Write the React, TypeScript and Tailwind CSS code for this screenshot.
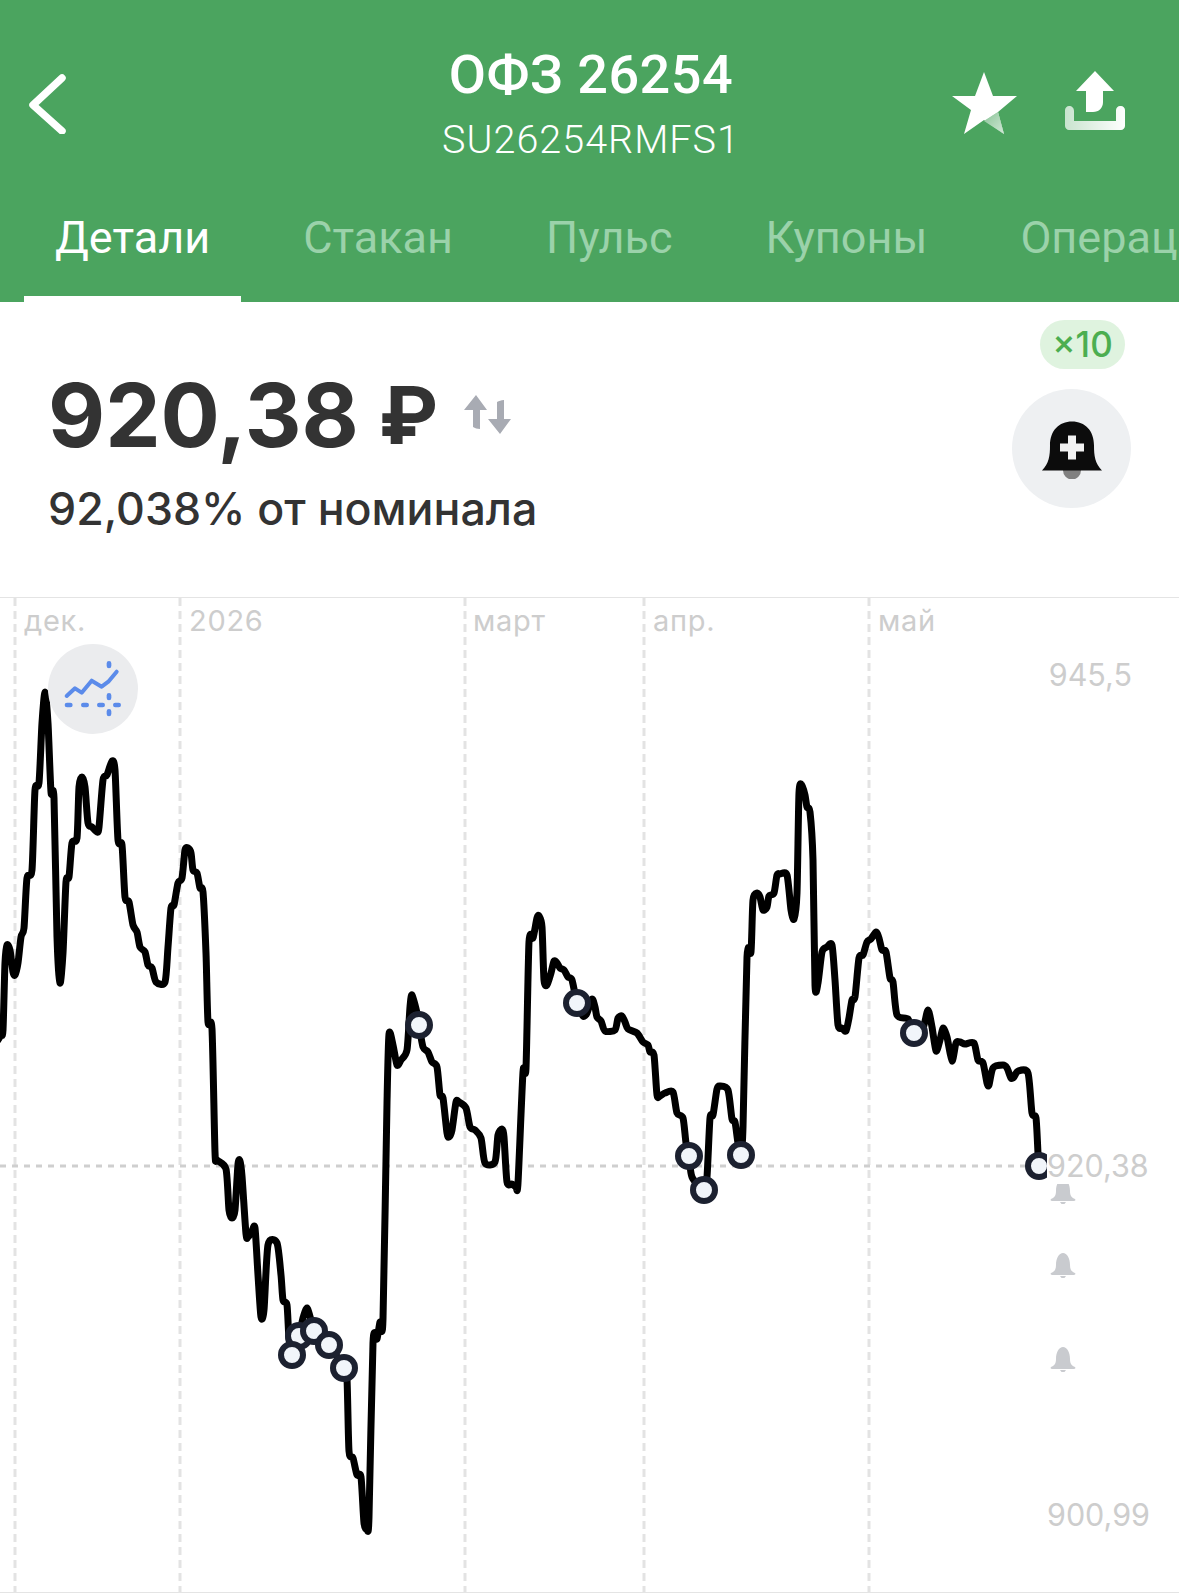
const tabs = ["Детали", "Стакан", "Пульс", "Купоны", "Операции"];

const monthLabels = [
  { text: "дек.", cls: "left-[24px]" },
  { text: "2026", cls: "left-[189px]" },
  { text: "март", cls: "left-[473px]" },
  { text: "апр.", cls: "left-[653px]" },
  { text: "май", cls: "left-[878px]" },
];

const gridX = [15, 180, 465, 644, 869];

// traced from the reference, page coordinates
const pts: [number, number][] = [
  [-2, 1040], [1, 1035], [3, 1030], [5, 963], [7, 945], [10, 950], [13, 972], [15, 975], [18, 963], [21, 937], [24, 928], [27, 878], [32, 870], [35, 790], [39, 783], [42, 723], [45, 692], [48, 723], [51, 792], [54, 798], [57, 937], [60, 983], [63, 953], [66, 882], [69, 877], [72, 843], [77, 838], [79, 787], [82, 777], [85, 787], [88, 823], [92, 827], [97, 832], [99, 827], [103, 780], [107, 775], [112, 761], [115, 770], [118, 840], [122, 845], [125, 897], [129, 902], [133, 925], [137, 932], [140, 947], [145, 952], [148, 965], [152, 968], [156, 982], [165, 982], [168, 947], [171, 908], [174, 905], [178, 883], [182, 878], [185, 850], [188, 848], [191, 853], [193, 870], [197, 873], [200, 888], [203, 892], [206, 953], [208, 1022], [212, 1029], [215, 1152], [217, 1160], [226, 1169], [229, 1210], [232, 1218], [235, 1210], [238, 1164], [240, 1161], [242, 1176], [246, 1234], [248, 1237], [252, 1231], [255, 1228], [258, 1275], [261, 1317], [264, 1310], [268, 1245], [277, 1243], [281, 1275], [283, 1300], [287, 1305], [289, 1339], [292, 1355], [299, 1336], [303, 1318], [307, 1308], [311, 1320], [314, 1331], [329, 1345], [344, 1368], [347, 1379], [349, 1451], [353, 1458], [357, 1475], [361, 1477], [364, 1523], [367, 1529], [369, 1517], [373, 1343], [377, 1339], [380, 1322], [383, 1319], [387, 1103], [389, 1034], [393, 1045], [397, 1065], [401, 1060], [407, 1050], [410, 1007], [412, 995], [417, 1013], [419, 1025], [423, 1047], [428, 1052], [432, 1062], [437, 1067], [440, 1095], [443, 1098], [447, 1133], [449, 1137], [452, 1130], [456, 1102], [459, 1102], [466, 1108], [470, 1127], [475, 1130], [481, 1138], [485, 1163], [495, 1162], [498, 1135], [502, 1129], [504, 1137], [507, 1182], [512, 1184], [516, 1187], [518, 1183], [523, 1072], [526, 1068], [529, 942], [533, 938], [537, 918], [539, 916], [542, 927], [544, 980], [547, 985], [551, 973], [554, 961], [557, 963], [560, 968], [564, 970], [568, 977], [572, 980], [577, 1003], [583, 1016], [587, 1013], [592, 999], [595, 1007], [597, 1017], [601, 1021], [605, 1031], [615, 1030], [618, 1018], [622, 1016], [625, 1022], [628, 1029], [637, 1033], [643, 1042], [648, 1045], [650, 1052], [654, 1055], [657, 1095], [660, 1096], [665, 1093], [673, 1092], [677, 1113], [683, 1118], [686, 1143], [689, 1156], [692, 1177], [704, 1190], [707, 1177], [710, 1118], [713, 1115], [717, 1089], [720, 1086], [728, 1090], [732, 1119], [735, 1122], [738, 1143], [741, 1155], [743, 1127], [747, 957], [751, 952], [753, 900], [757, 893], [760, 897], [763, 910], [767, 907], [769, 896], [774, 893], [777, 875], [780, 874], [787, 875], [791, 910], [794, 919], [797, 893], [799, 793], [802, 785], [805, 795], [807, 807], [810, 812], [813, 860], [815, 985], [818, 983], [822, 952], [827, 947], [832, 945], [835, 980], [838, 1025], [842, 1028], [846, 1031], [849, 1018], [852, 1000], [855, 997], [859, 958], [863, 955], [867, 942], [871, 939], [876, 932], [879, 938], [882, 950], [886, 952], [890, 978], [893, 982], [897, 1015], [908, 1019], [914, 1033], [923, 1028], [928, 1010], [932, 1027], [936, 1051], [940, 1040], [943, 1028], [947, 1037], [952, 1061], [956, 1043], [960, 1042], [965, 1044], [974, 1043], [978, 1060], [983, 1063], [987, 1083], [989, 1085], [993, 1068], [1003, 1065], [1007, 1068], [1011, 1078], [1014, 1077], [1018, 1071], [1028, 1073], [1032, 1113], [1036, 1118], [1038, 1153], [1039, 1166],
];

const markers: [number, number][] = [
  [299, 1336], [292, 1355], [314, 1331], [329, 1345], [344, 1368], [419, 1025], [577, 1003], [689, 1156], [704, 1190], [741, 1155], [914, 1033], [1039, 1166],
];

function smoothPath(p: [number, number][]) {
  let d = `M${p[0][0]} ${p[0][1]}`;
  for (let i = 0; i < p.length - 1; i++) {
    const a = p[Math.max(i - 1, 0)];
    const b = p[i];
    const c = p[i + 1];
    const e = p[Math.min(i + 2, p.length - 1)];
    const c1x = b[0] + (c[0] - a[0]) / 8;
    const c1y = b[1] + (c[1] - a[1]) / 8;
    const c2x = c[0] - (e[0] - b[0]) / 8;
    const c2y = c[1] - (e[1] - b[1]) / 8;
    d += `C${c1x} ${c1y} ${c2x} ${c2y} ${c[0]} ${c[1]}`;
  }
  return d;
}

function SmallBell({ y }: { y: number }) {
  return (
    <g transform={`translate(1051 ${y})`} fill="#c9cbcf">
      <path d="M0 20c3-1 5-3 5-8 0-7 3-12 7-12s7 5 7 12c0 5 2 7 5 8 1 1 0 2-1 2H1c-1 0-2-1-1-2z" />
      <path d="M9 23h6l-1.500 2h-3z" />
    </g>
  );
}

function Chart() {
  return (
    <div className="relative h-[998px] border-t border-[#e4e4e4] font-['Inter',sans-serif]">
      <svg className="absolute inset-0" width="1179" height="998" viewBox="0 598 1179 998">
        {gridX.map((x) => (
          <line key={x} x1={x} x2={x} y1="598" y2="1592" stroke="#e3e3e3" strokeWidth="3" strokeDasharray="8 5" />
        ))}
        <line x1="0" x2="1047" y1="1166" y2="1166" stroke="#cfcfcf" strokeWidth="3" strokeDasharray="6 6" />
        <line x1="0" x2="1179" y1="1592.500" y2="1592.500" stroke="#e4e4e4" strokeWidth="1" />
        <path d={smoothPath(pts)} fill="none" stroke="#000" strokeWidth="7" strokeLinejoin="round" strokeLinecap="round" />
        {markers.map(([x, y]) => (
          <circle key={x} cx={x} cy={y} r="11" fill="#f1f5fa" stroke="#1c2130" strokeWidth="6" />
        ))}
        <SmallBell y={1179} />
        <SmallBell y={1253} />
        <SmallBell y={1347} />
      </svg>

      {monthLabels.map((m) => (
        <span key={m.text} className={`absolute top-[6px] text-[29px] leading-[34px] tracking-[0.7px] text-[#cdcdcd] ${m.cls}`}>
          {m.text}
        </span>
      ))}

      <span className="absolute right-[47px] top-[60px] text-[30.500px] leading-[34px] text-[#cdcdcd]">945,5</span>
      <span className="absolute left-[1047px] top-[550px] bg-white h-[36px] text-[30.500px] leading-[36px] text-[#cdcdcd]">920,38</span>
      <span className="absolute right-[29px] top-[900px] text-[30.500px] leading-[34px] text-[#cdcdcd]">900,99</span>

      <button className="absolute left-[48px] top-[46px] w-[90px] h-[90px] rounded-full bg-[#ebecee] flex items-center justify-center">
        <svg width="90" height="90" viewBox="145 162 268 270" fill="none">
          <path d="M200 318L225 295L245 308L275 272L305 290L325 275L350 245" stroke="#5b8bea" strokeWidth="12" strokeLinecap="round" strokeLinejoin="round" />
          <g stroke="#5b8bea" strokeWidth="14" strokeLinecap="round">
            <path d="M327 220v8M327 316v8M327 364v8M201 345h10M250 345h10M298 345h10M346 345h10" />
          </g>
        </svg>
      </button>
    </div>
  );
}

export default function App() {
  return (
    <div className="w-[1179px] h-[1595px] overflow-hidden bg-white">
      <header className="h-[302px] bg-[#4ba45f] text-white font-['Roboto',sans-serif]">
        <div className="h-[211px] grid grid-cols-[1fr_auto_1fr]">
          <div className="pt-[70px] pl-[28px]">
            <svg width="44" height="64" viewBox="0 0 44 64" fill="none">
              <path d="M34 8L5 35L34 61" stroke="#fff" strokeWidth="7.500" strokeLinecap="round" strokeLinejoin="round" />
            </svg>
          </div>
          <div className="pt-[47px] pl-[3px] flex flex-col items-center">
            <div className="text-[54px] leading-[56px] font-medium tracking-[0.5px]">ОФЗ 26254</div>
            <div className="mt-[15px] text-[39.500px] leading-[44px] font-light tracking-[1px]">SU26254RMFS1</div>
          </div>
          <div className="pt-[71px] pr-[54px] flex justify-end gap-[48px]">
            <svg width="66" height="64" viewBox="951 71 66 64">
              <defs>
                <linearGradient id="legFade" x1="0" y1="0" x2="1" y2="1">
                  <stop offset="0" stopColor="#fff" stopOpacity="0.35" />
                  <stop offset="1" stopColor="#fff" stopOpacity="0.75" />
                </linearGradient>
              </defs>
              <path d="M984 72L993 96L1017 96L998 112L1004 134L984 120L964 134L971 110L952 96L975 96Z" fill="#fff" />
              <path d="M984 121L998 112L1004 134Z" fill="#4ba45f" />
              <path d="M984 121L998 112L1004 134Z" fill="url(#legFade)" />
            </svg>
            <svg width="60" height="60" viewBox="1065 72 60 60">
              <defs>
                <linearGradient id="trayFade" x1="0" y1="0" x2="1" y2="0">
                  <stop offset="0" stopColor="#fff" stopOpacity="0.7" />
                  <stop offset="1" stopColor="#fff" stopOpacity="1" />
                </linearGradient>
              </defs>
              <path d="M1095 72L1114 92H1103V103C1103 109 1099 113 1093 113H1086V92H1076Z" fill="#fff" />
              <path d="M1069 107C1072 107 1074 109 1074 112V122H1116V111C1116 109 1118 107 1120 107H1121C1123 107 1125 109 1125 111V127C1125 129 1123 131 1121 131H1069C1067 131 1065 129 1065 127V111C1065 109 1067 107 1069 107Z" fill="url(#trayFade)" />
            </svg>
          </div>
        </div>
        <nav className="flex overflow-hidden pl-[24px] gap-[31px] h-[91px]">
          {tabs.map((t, i) => (
            <div
              key={t}
              className={`shrink-0 px-[31px] h-full text-[45px] leading-[54px] font-normal ${i === 0 ? "text-white border-b-[6px] border-white" : "text-[#9bd2aa]"}`}
            >
              {t}
            </div>
          ))}
        </nav>
      </header>

      <section className="h-[295px] flex justify-between font-['Inter',sans-serif] text-[#333333]">
        <div className="pl-[48px] pt-[63px]">
          <div className="flex items-center h-[100px]">
            <span className="text-[88px] leading-[100px] font-bold">920,38</span>
            <span className="ml-[20px] text-[80px] leading-[100px] font-bold">₽</span>
            <svg className="ml-[26px]" width="48" height="40" viewBox="463 402 48 40" fill="#a8abb3">
              <path d="M475 402L486 417H479V436C476 436 474 435 472 434V417H463Z" />
              <path d="M499 441L510 426H503V407C500 407 498 408 496 409V426H487Z" />
            </svg>
          </div>
          <div className="mt-[16px] text-[44.700px] leading-[56px] font-[550]">92,038% от номинала</div>
        </div>
        <div className="pt-[18px] pr-[48px] flex flex-col items-end">
          <div className="mr-[6px] w-[85px] h-[49px] rounded-full bg-[#dff3df] text-[#4cae50] text-[35px] leading-[49px] font-medium text-center">×10</div>
          <div className="mt-[20px] w-[119px] h-[119px] rounded-full bg-[#eef0f2] flex items-center justify-center">
            <svg width="62" height="60" viewBox="1040 418.500 62 60">
              <path d="M1062 470a9 9 0 0 0 18 0v-1h-18z" fill="#808080" />
              <path d="M1041 470C1048 463 1049 455 1049 445C1049 430 1058 421 1071 421C1084 421 1093 430 1093 445C1093 455 1094 463 1101 470Z" fill="#0c0c0c" />
              <path d="M1067 435h8v8h8v8h-8v8h-8v-8h-8v-8h8z" fill="#f2f2f2" />
            </svg>
          </div>
        </div>
      </section>

      <Chart />
    </div>
  );
}
